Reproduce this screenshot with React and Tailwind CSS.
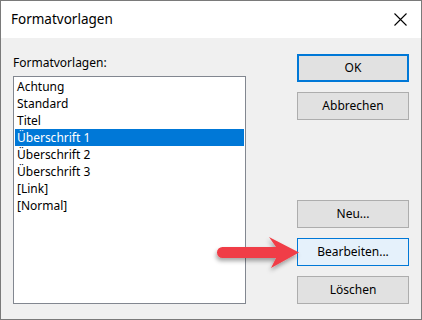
import React from 'react';

const styles = ['Achtung', 'Standard', 'Titel', 'Überschrift 1', 'Überschrift 2', 'Überschrift 3', '[Link]', '[Normal]'];

const font = { fontFamily: '"Noto Sans", "Liberation Sans", sans-serif' };

const Button = ({ children, variant }) => {
  const base = 'h-[28px] w-[112px] flex items-center justify-center text-[12px] text-black';
  const look =
    variant === 'default'
      ? 'border-2 border-[#0078d7] bg-[#e1e1e1]'
      : variant === 'hover'
      ? 'border border-[#0078d7] bg-[#e5f1fb]'
      : 'border border-[#adadad] bg-[#e1e1e1]';
  return <div className={`${base} ${look}`}>{children}</div>;
};

const Arrow = () => (
  <svg className="absolute left-[205px] top-[228px]" width="100" height="50" viewBox="0 0 100 50">
    <defs>
      <filter id="sh" x="-20%" y="-40%" width="140%" height="180%">
        <feDropShadow dx="-1" dy="3" stdDeviation="2" floodColor="#000" floodOpacity="0.35" />
      </filter>
    </defs>
    <path
      d="M16.5 18 L70 18 L63 8 L93 23.5 L65 39 L70 29 L16.5 29 A5.5 5.5 0 0 1 16.5 18 Z"
      fill="#f03e46"
      filter="url(#sh)"
    />
  </svg>
);

export default function App() {
  return (
    <div className="relative w-[422px] h-[320px] border border-[#7a7a7a] bg-[#f0f0f0] flex flex-col" style={font}>
      <div className="h-[37px] bg-white flex items-center justify-between pl-[10px] pr-[14px]">
        <span className="text-[13.5px] text-black">Formatvorlagen</span>
        <svg width="13" height="13" viewBox="0 0 13 13">
          <path d="M0.5 0.5 L12.5 12.5 M12.5 0.5 L0.5 12.5" stroke="#000" strokeWidth="1.1" />
        </svg>
      </div>
      <div className="flex-1 flex justify-between pl-[12px] pr-[12px] pt-[16px] pb-[15px]">
        <div className="flex flex-col">
          <div className="h-[16px] mt-[1px] text-[12px] leading-[16px] text-black">Formatvorlagen:</div>
          <div className="mt-[5px] w-[233px] flex-1 border border-[#828790] bg-white p-px">
            {styles.map((s, i) => (
              <div
                key={s}
                className={`h-[17px] pl-[2px] text-[12px] leading-[17px] ${i === 3 ? 'bg-[#0078d7] text-white' : 'text-black'}`}
              >
                {s}
              </div>
            ))}
          </div>
        </div>
        <div className="flex flex-col justify-between">
          <div className="flex flex-col gap-[10px]">
            <Button variant="default">OK</Button>
            <Button>Abbrechen</Button>
          </div>
          <div className="flex flex-col gap-[10px]">
            <Button>Neu...</Button>
            <Button variant="hover">Bearbeiten...</Button>
            <Button>Löschen</Button>
          </div>
        </div>
      </div>
      <Arrow />
    </div>
  );
}
